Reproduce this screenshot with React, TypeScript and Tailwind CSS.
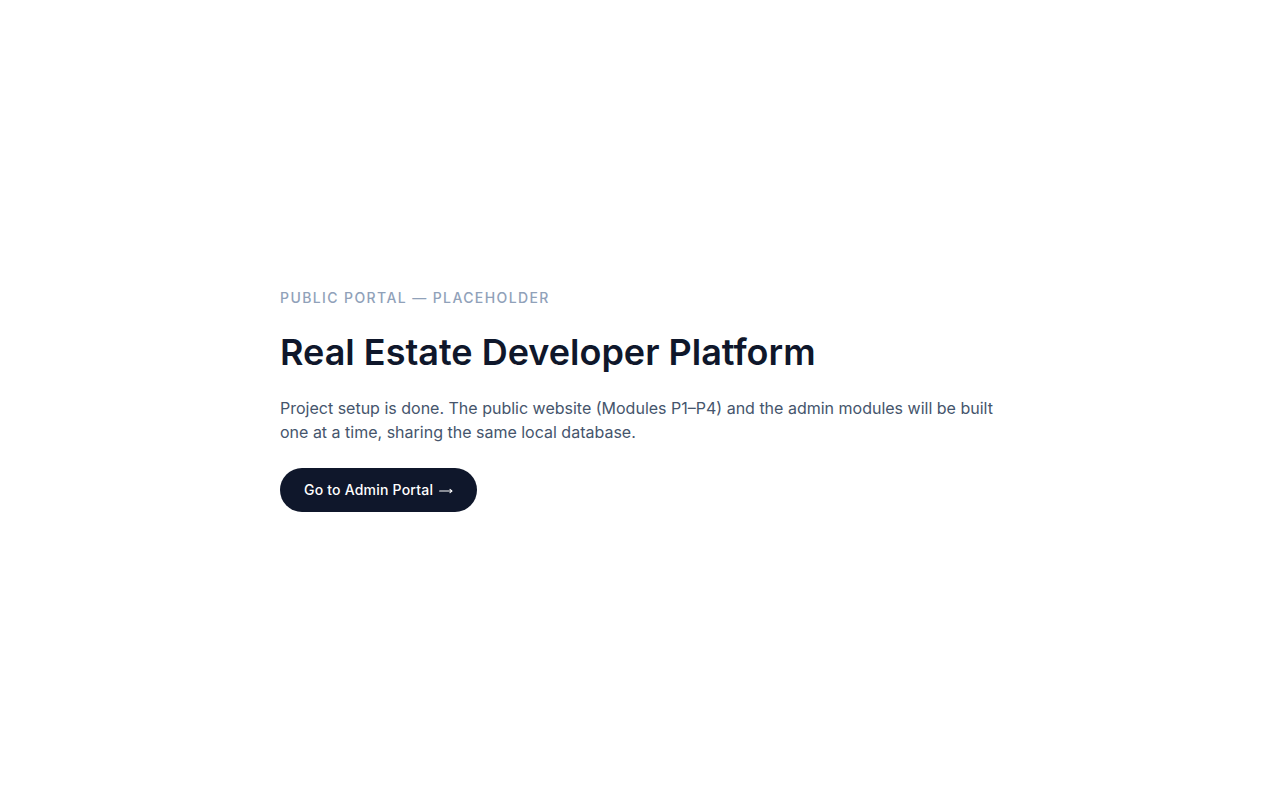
export default function App() {
  return (
    <div className="min-h-screen flex items-center bg-white" style={{ fontFamily: "Inter, 'Noto Sans', sans-serif" }}>
      <div className="mx-auto w-full max-w-3xl px-6">
        <p className="text-sm font-medium uppercase tracking-widest text-slate-400">Public Portal — Placeholder</p>
        <h1 className="mt-6 text-4xl font-semibold text-slate-900">Real Estate Developer Platform</h1>
        <p className="mt-6 text-base text-slate-600">
          Project setup is done. The public website (Modules P1–P4) and the admin modules will be built one at a time, sharing the same local database.
        </p>
        <div className="mt-6">
          <a href="#" className="inline-flex items-center rounded-full bg-slate-900 px-6 py-3 text-sm font-medium tracking-[0.015em] text-white">
            <span>Go to Admin Portal</span>
            <svg className="ml-1.5 mt-px" width="14" height="8" viewBox="0 0 14 8" fill="none" stroke="currentColor" strokeWidth="1.1" strokeLinecap="round" strokeLinejoin="round">
              <path d="M0.6 4H12.8" />
              <path d="M11 2.4L12.8 4L11 5.6" />
            </svg>
          </a>
        </div>
      </div>
    </div>
  );
}
